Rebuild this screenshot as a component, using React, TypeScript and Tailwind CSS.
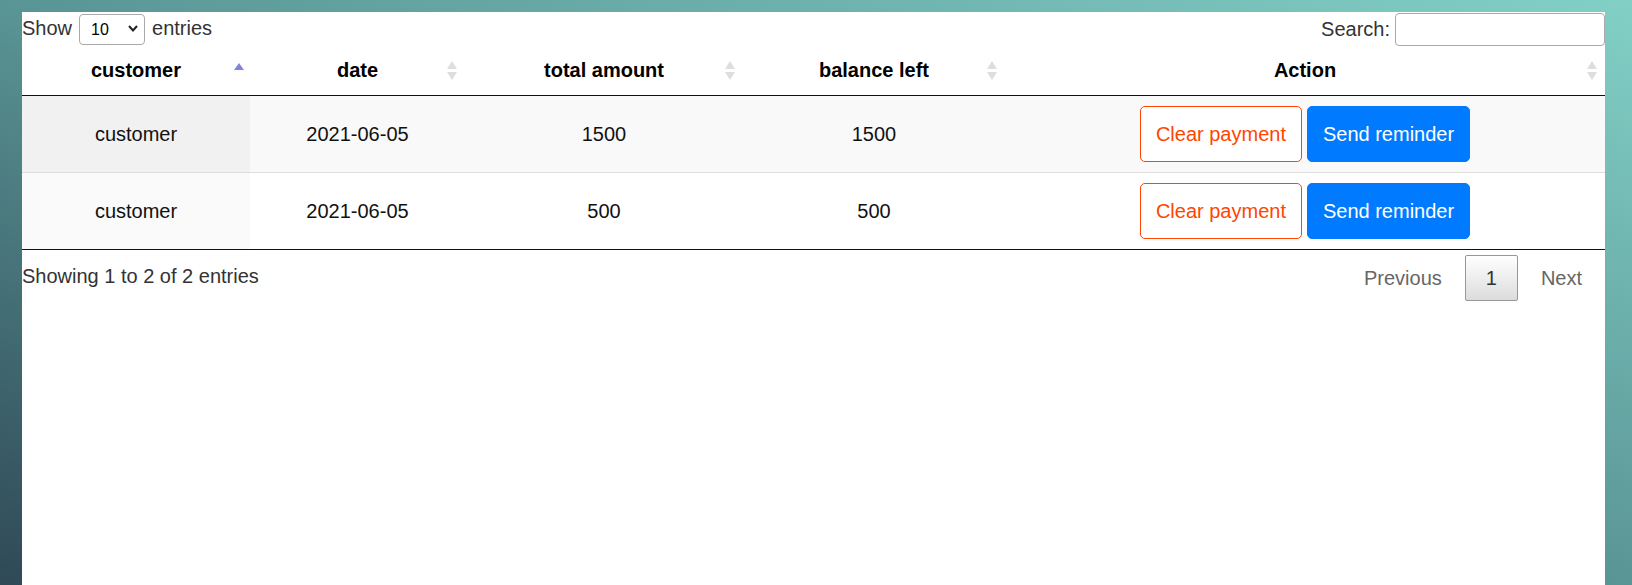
import React from "react";

const SortBoth = () => (
  <svg className="absolute right-[8px] top-1/2 -translate-y-1/2" width="10" height="20" viewBox="0 0 10 20">
    <polygon points="5,0 10,8 0,8" fill="#dedede" />
    <polygon points="0,11 10,11 5,19" fill="#dedede" />
  </svg>
);

const SortAsc = () => (
  <svg className="absolute right-[6px] top-[17px]" width="10" height="8" viewBox="0 0 10 8">
    <polygon points="5,0 10,7 0,7" fill="#8383dc" />
  </svg>
);

const rows = [
  { customer: "customer", date: "2021-06-05", total: "1500", balance: "1500" },
  { customer: "customer", date: "2021-06-05", total: "500", balance: "500" },
];

export default function App() {
  return (
    <div className="min-h-screen w-full bg-[linear-gradient(to_top_right,#2f4956,#5a9595_50%,#82d0c6)] pt-[12px] font-['Liberation_Sans',Arial,sans-serif]">
      <div className="ml-[22px] w-[1583px] min-h-[573px] bg-white">
        {/* Top controls */}
        <div className="flex h-[34px] items-start justify-between text-[20px] text-[#333]">
          <div className="flex items-center h-[33px]">
            <span className="leading-[23px]">Show</span>
            <div className="relative ml-[7px] mt-[1px]">
              <select className="h-[31px] w-[66px] appearance-none rounded-[4px] border border-[#aaa] bg-white pl-[11px] text-[16px] text-black outline-none">
                <option>10</option>
                <option>25</option>
                <option>50</option>
                <option>100</option>
              </select>
              <svg className="pointer-events-none absolute left-[49px] top-[12px]" width="10" height="7" viewBox="0 0 10 7">
                <polyline points="1,1 5,5.5 9,1" fill="none" stroke="#222" strokeWidth="2" />
              </svg>
            </div>
            <span className="ml-[7px] leading-[23px]">entries</span>
          </div>
          <div className="flex items-center h-[34px]">
            <span className="leading-[23px]">Search:</span>
            <input className="ml-[5px] mt-[1px] h-[33px] w-[210px] rounded-[4px] border border-[#aaa] bg-white outline-none" />
          </div>
        </div>

        {/* Table */}
        <table className="w-full border-separate border-spacing-0 text-[20px]">
          <colgroup>
            <col className="w-[228px]" />
            <col className="w-[215px]" />
            <col className="w-[278px]" />
            <col className="w-[262px]" />
            <col className="w-[600px]" />
          </colgroup>
          <thead>
            <tr>
              {["customer", "date", "total amount", "balance left", "Action"].map((h, i) => (
                <th
                  key={h}
                  className="relative h-[50px] border-b border-[#111] p-0 pb-[2px] text-center align-middle font-bold leading-[24px] text-black"
                >
                  {h}
                  {i === 0 ? <SortAsc /> : <SortBoth />}
                </th>
              ))}
            </tr>
          </thead>
          <tbody>
            {rows.map((r, i) => {
              const last = i === rows.length - 1;
              const rowBg = i % 2 === 0 ? "bg-[#f9f9f9]" : "bg-white";
              const firstBg = i % 2 === 0 ? "bg-[#f1f1f1]" : "bg-[#fafafa]";
              const b = last ? "border-b border-[#111]" : "border-b border-[#ddd]";
              const td = `py-[10px] px-[12px] text-center align-middle leading-[24px] text-[#111] ${b}`;
              return (
                <tr key={i} className={rowBg}>
                  <td className={`${td} ${firstBg}`}>{r.customer}</td>
                  <td className={td}>{r.date}</td>
                  <td className={td}>{r.total}</td>
                  <td className={td}>{r.balance}</td>
                  <td className={td}>
                    <div className="flex justify-center gap-[5px]">
                      <button className="h-[56px] rounded-[5px] border border-[#ff4500] bg-white px-[15px] text-[20px] leading-[30px] text-[#ff4500]">
                        Clear payment
                      </button>
                      <button className="h-[56px] rounded-[5px] border border-[#007bff] bg-[#007bff] px-[15px] text-[20px] leading-[30px] text-white">
                        Send reminder
                      </button>
                    </div>
                  </td>
                </tr>
              );
            })}
          </tbody>
        </table>

        {/* Footer */}
        <div className="flex items-start justify-between text-[20px]">
          <div className="pt-[15px] leading-[23px] text-[#333]">Showing 1 to 2 of 2 entries</div>
          <div className="flex pt-[5px] pr-[2px]">
            <span className="rounded-[2px] border border-transparent px-[20px] py-[10px] leading-[24px] text-[#666]">Previous</span>
            <span className="ml-[2px] rounded-[2px] border border-[#979797] bg-[linear-gradient(to_bottom,#ffffff,#dcdcdc)] px-[20px] py-[10px] leading-[24px] text-[#333]">
              1
            </span>
            <span className="ml-[2px] rounded-[2px] border border-transparent px-[20px] py-[10px] leading-[24px] text-[#666]">Next</span>
          </div>
        </div>
      </div>
    </div>
  );
}
